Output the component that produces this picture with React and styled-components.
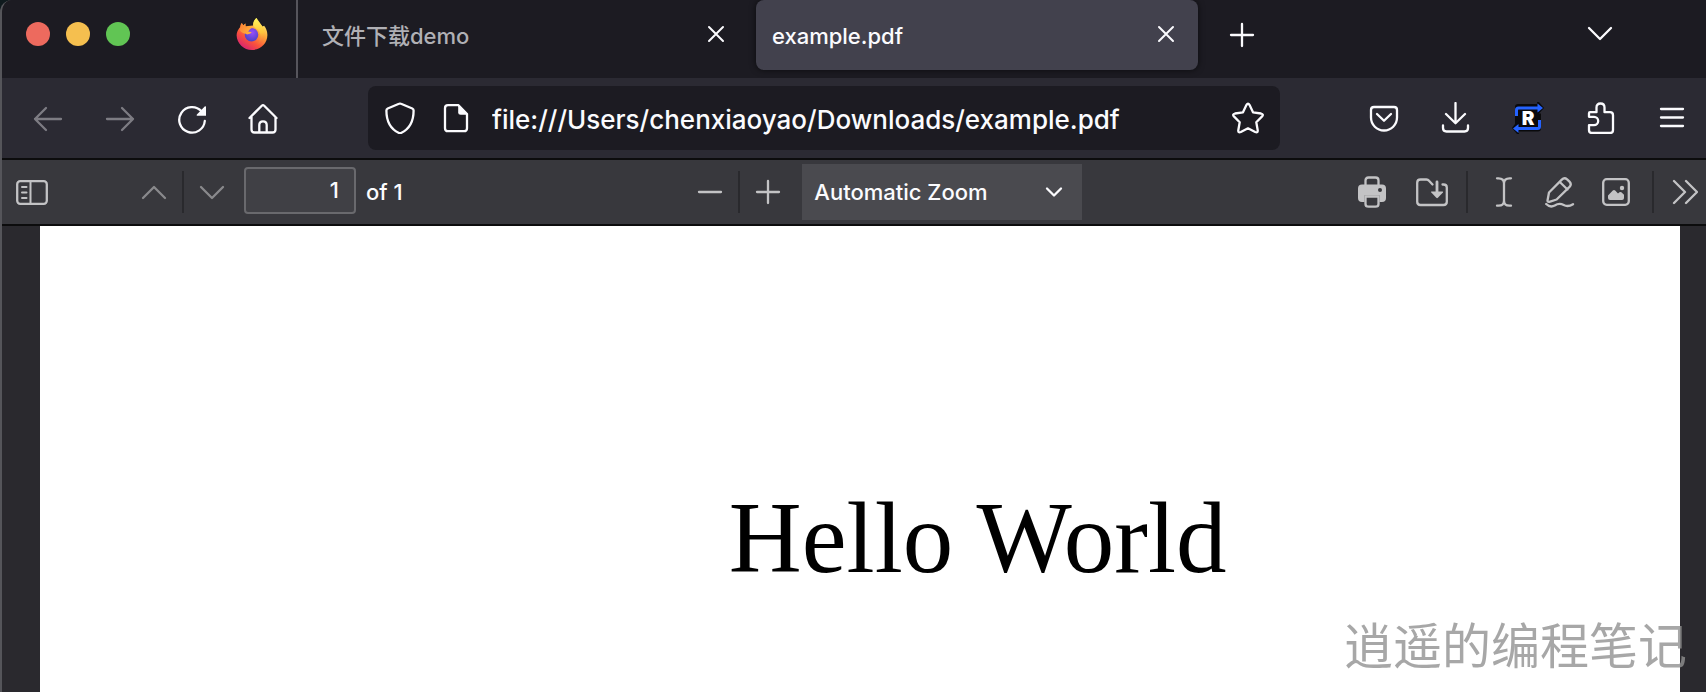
import React from "react";
import styled, { createGlobalStyle } from "styled-components";

const GlobalStyle = createGlobalStyle`
  *, *::before, *::after { box-sizing: border-box; }
  html { background: #0f1a1e; }
  body {
    margin: 0;
    font-family: Inter, "Noto Sans CJK SC", sans-serif;
    font-weight: 500;
    color: #fbfbfe;
  }
  button, input, select { font: inherit; color: inherit; }
`;

const Window = styled.div`
  position: relative;
  display: flex;
  flex-direction: column;
  min-height: 100vh;
  overflow: hidden;
  border-left: 2px solid #55555a;
  border-top-left-radius: 12px;
  background: #2a292e;
`;

const TabStrip = styled.header`
  display: flex;
  height: 78px;
  padding-right: 74px;
  background: #1c1b22;
`;

const TrafficLights = styled.div`
  display: flex;
  gap: 16px;
  padding: 22px 0 0 24px;
`;

const Light = styled.button`
  width: 24px;
  height: 24px;
  padding: 0;
  border: 0;
  border-radius: 50%;
  background: ${(p) => p.$color};
`;

const PinnedTab = styled.a`
  display: flex;
  padding: 18px 28px 0 106px;
  border-right: 2px solid #56555c;
  height: 78px;
`;

const Tab = styled.div`
  display: flex;
  justify-content: space-between;
  flex: 0 1 ${(p) => (p.$active ? 442 : 446)}px;
  height: 70px;
  padding: 0 ${(p) => (p.$active ? "16px 0 16px" : "12px 0 24px")};
  margin-right: 12px;
  border-radius: 8px;
  background: ${(p) => (p.$active ? "#42414d" : "transparent")};
  box-shadow: ${(p) => (p.$active ? "0 0 6px rgba(0, 0, 0, 0.6)" : "none")};
  color: ${(p) => (p.$active ? "#fbfbfe" : "#b0b0b5")};
`;

const TabLink = styled.a`
  font-size: 22px;
  line-height: 72px;
  color: inherit;
  text-decoration: none;
  white-space: nowrap;
`;

const IconButton = styled.button`
  display: flex;
  align-items: center;
  justify-content: center;
  flex: none;
  width: ${(p) => p.$width || 64}px;
  height: ${(p) => p.$height || 64}px;
  margin-left: ${(p) => (p.$end ? "auto" : 0)};
  padding: 0;
  border: 0;
  background: none;
  color: ${(p) => p.$color || "#fbfbfe"};
`;

const Icon = styled.svg`
  display: block;
  flex: none;
  width: 32px;
  height: 32px;
  fill: none;
  stroke: currentColor;
  stroke-width: 2.3;
  stroke-linecap: round;
  stroke-linejoin: round;
`;

const NavBar = styled.nav`
  display: flex;
  align-items: center;
  gap: 72px;
  height: 82px;
  padding: 0 2px 0 14px;
  border-bottom: 2px solid #0c0c0d;
  background: #2b2a33;
`;

const ButtonGroup = styled.div`
  display: flex;
  gap: 8px;
`;

const AddressBar = styled.form`
  display: flex;
  align-items: center;
  flex: 1;
  min-width: 0;
  height: 64px;
  border-radius: 8px;
  background: #1c1b22;
`;

const AddressInput = styled.input`
  flex: 1;
  min-width: 0;
  height: 48px;
  padding: 2px 0 0;
  margin-left: 12px;
  border: 0;
  outline: 0;
  background: none;
  font-size: 26px;
`;

const PdfToolbar = styled.div`
  display: flex;
  align-items: center;
  justify-content: space-between;
  height: 66px;
  border-bottom: 2px solid #0c0c0d;
  background: #38383d;
  color: #c3c3c5;
`;

const ToolGroup = styled.div`
  display: flex;
  align-items: center;
  padding-left: ${(p) => p.$indent || 0}px;
`;

const Separator = styled.span`
  width: 2px;
  height: 42px;
  background: #29292d;
  margin: 0 ${(p) => p.$gap || 0}px;
`;

const PageInput = styled.input`
  width: 112px;
  height: 47px;
  margin: 0 0 4px 4px;
  padding: 0 15px;
  border: 2px solid #69696d;
  border-radius: 4px;
  background: #404045;
  color: #fbfbfe;
  font-size: 22px;
  text-align: right;
`;

const PageCount = styled.label`
  margin-left: 10px;
  font-size: 22px;
  color: #fbfbfe;
`;

const ZoomField = styled.div`
  display: grid;
  align-items: center;
  width: 280px;
  height: 56px;
  margin-left: 7px;
  background: #4a4a4f;
  color: #fbfbfe;
`;

const ZoomSelect = styled.select`
  grid-area: 1 / 1;
  width: 100%;
  height: 56px;
  padding: 0 48px 0 12px;
  border: 0;
  appearance: none;
  background: none;
  font-size: 22px;
`;

const ZoomArrow = styled.span`
  grid-area: 1 / 1;
  justify-self: end;
  margin-right: 12px;
  pointer-events: none;
`;

const Viewer = styled.main`
  display: flex;
  flex: 1;
  padding: 0 26px 0 38px;
`;

const Page = styled.article`
  flex: 1;
  padding: 256px 0 60px 42%;
  background: #fff;
  color: #000;
`;

const Title = styled.h1`
  margin: 0;
  font: 400 101px/112px "Liberation Serif", serif;
  white-space: nowrap;
`;

const Watermark = styled.p`
  position: absolute;
  right: 19px;
  bottom: 17px;
  margin: 0;
  font: 400 49px/64px "Noto Sans CJK SC", sans-serif;
  color: rgba(145, 145, 145, 0.8);
`;

const Firefox = () => (
  <Icon viewBox="0 0 32 32" aria-hidden="true">
    <defs>
      <linearGradient id="fxBody" x1="0.85" y1="0.1" x2="0.25" y2="1">
        <stop offset="0" stopColor="#fff36e" />
        <stop offset="0.35" stopColor="#ffa436" />
        <stop offset="0.68" stopColor="#f9503d" />
        <stop offset="1" stopColor="#d51f76" />
      </linearGradient>
      <linearGradient id="fxFlame" x1="0.5" y1="0" x2="0.5" y2="1">
        <stop offset="0" stopColor="#fff85c" />
        <stop offset="0.55" stopColor="#ffc43c" />
        <stop offset="1" stopColor="#f9633b" />
      </linearGradient>
      <radialGradient id="fxGlobe" cx="0.55" cy="0.35" r="0.65">
        <stop offset="0" stopColor="#9a4dfb" />
        <stop offset="1" stopColor="#4b43c4" />
      </radialGradient>
      <linearGradient id="fxHead" x1="0" y1="0" x2="1" y2="0.5">
        <stop offset="0" stopColor="#fd7d35" />
        <stop offset="1" stopColor="#ffb13b" />
      </linearGradient>
    </defs>
    <g stroke="none">
      <path fill="url(#fxBody)" d="M5.8 5C4.6 6.3 4.2 7.6 4.2 9 2 11.500 .6 14.500.6 17.200.8 25.400 7.700 32 16 32s15.400-6.500 15.400-15c0-3.500-1.500-7.300-3.300-9.200L26.500 8.600 20.500 0C18 2 17 4.500 17.200 7.500L9.500 8.200 9.400 5.600 7.300 7.300z" />
      <path fill="url(#fxFlame)" d="M20.500 0c.5 3.300 3.500 5.300 5.600 8.300 4.500 6.700 2.300 15-4.600 18.100 3.300-4.400 4.200-9.600 1-13.800-2-2.600-5.400-3.200-5.300-5.600C17.200 4 18.400 1.500 20.500 0z" />
      <circle cx="15.500" cy="16.700" r="6.800" fill="url(#fxGlobe)" />
      <path fill="url(#fxHead)" d="M5.800 5 4.500 9C3 11 3.500 13 6 14.500c1.500 1 3.500.8 5 2 1-.2 2.700-.7 4.500-1.800 0-.7-.8-1-3.300-1 1-1.900 2.200-2.900 4-3.900-2.400-.9-4.600-.8-6.700-.2L9.400 5.600 7.300 8z" />
    </g>
  </Icon>
);

const Close = () => (
  <Icon viewBox="0 0 32 32"><path d="M9 9l14 14M23 9 9 23" strokeWidth="2" /></Icon>
);
const Plus = () => <Icon viewBox="0 0 32 32"><path d="M16 5v22M5 16h22" /></Icon>;
const Minus = () => <Icon viewBox="0 0 32 32"><path d="M5 16h22" /></Icon>;
const Chevron = ({ up }) => (
  <Icon viewBox="0 0 32 32"><path d={up ? "M5 22 16 11l11 11" : "M5 11l11 11 11-11"} /></Icon>
);

export default function App() {
  return (
    <>
      <GlobalStyle />
      <Window>
        <TabStrip>
          <TrafficLights>
            <Light $color="#ed6a5e" aria-label="Close window" />
            <Light $color="#f5bf4f" aria-label="Minimize window" />
            <Light $color="#61c554" aria-label="Zoom window" />
          </TrafficLights>
          <PinnedTab href="#firefox" aria-label="Firefox"><Firefox /></PinnedTab>
          <Tab>
            <TabLink href="#demo">文件下载demo</TabLink>
            <IconButton $width={32} $height={68} aria-label="Close tab"><Close /></IconButton>
          </Tab>
          <Tab $active>
            <TabLink href="#example">example.pdf</TabLink>
            <IconButton $width={32} $height={68} aria-label="Close tab"><Close /></IconButton>
          </Tab>
          <IconButton $height={70} aria-label="New tab"><Plus /></IconButton>
          <IconButton $height={66} $end aria-label="List all tabs"><Chevron /></IconButton>
        </TabStrip>

        <NavBar>
          <ButtonGroup>
            <IconButton $color="#7d7c83" aria-label="Back">
              <Icon viewBox="0 0 32 32"><path d="M29 17H3M14 6 3 17l11 11" /></Icon>
            </IconButton>
            <IconButton $color="#7d7c83" aria-label="Forward">
              <Icon viewBox="0 0 32 32"><path d="M3 17h26M18 6l11 11-11 11" /></Icon>
            </IconButton>
            <IconButton aria-label="Reload">
              <Icon viewBox="0 0 32 32">
                <path d="M25.500 9.200A12.800 12.800 0 1 0 28.800 19" />
                <path d="M30 4.800v9h-8.600c-.8 0-1-.8-.5-1.300l7.800-7.900c.5-.5 1.300-.3 1.300.2z" fill="currentColor" stroke="none" />
              </Icon>
            </IconButton>
            <IconButton aria-label="Home">
              <Icon viewBox="0 0 32 32">
                <path d="M1.500 16 13.800 3.700q1.200-1.200 2.400 0L28.500 16M3.500 15V27.500q0 3 3 3H24.500q3 0 3-3V15M11.300 30.500V23q0-3.700 3.700-3.700t3.700 3.700v7.500" />
              </Icon>
            </IconButton>
          </ButtonGroup>
          <AddressBar>
            <IconButton type="button" aria-label="Tracking protection">
              <Icon viewBox="0 0 32 32">
                <path d="M15 1.800q1-.5 2 0L28.300 6.500q1.300.6 1.300 2C29.600 20 26 26.800 17 31q-1 .4-2 0C6 26.800 2.400 20 2.400 8.500q0-1.400 1.300-2z" />
              </Icon>
            </IconButton>
            <IconButton type="button" $width={48} aria-label="Site information">
              <Icon viewBox="0 0 32 32">
                <path d="M18.500 3.200H8q-3 0-3 3v20q0 3 3 3h16q3 0 3-3V12z" />
                <path d="M18.200 2.200v8q0 2.500 2.500 2.500h7.500z" fill="currentColor" stroke="none" />
              </Icon>
            </IconButton>
            <AddressInput aria-label="Address" defaultValue="file:///Users/chenxiaoyao/Downloads/example.pdf" />
            <IconButton type="button" aria-label="Bookmark this page">
              <Icon viewBox="0 0 32 32">
                <path d="M14.400 3.100q1.600-3 3.200 0l3.400 7.200 8 1.200q3 .7 1.100 2.900l-5.800 5.800 1.400 8q.3 3-2.500 1.800L16 26.300 8.800 30Q6 31.200 6.300 28.200l1.400-8-5.800-5.800Q0 12.200 3 11.500l8-1.200z" />
              </Icon>
            </IconButton>
          </AddressBar>
          <ButtonGroup>
            <IconButton aria-label="Save to Pocket">
              <Icon viewBox="0 0 32 32">
                <path d="M6 5h20q3 0 3 3v7.500a13 13 0 0 1-26 0V8q0-3 3-3zM9 12l7 6.800L23 12" />
              </Icon>
            </IconButton>
            <IconButton aria-label="Downloads">
              <Icon viewBox="0 0 32 32">
                <path d="M15.500 1v20M6 12l9.500 9.300L25 12M3 23.500V26q0 3.500 3.500 3.500h18Q28 29.500 28 26v-2.500" />
              </Icon>
            </IconButton>
            <IconButton aria-label="R extension">
              <Icon viewBox="0 0 32 32">
                <path d="M3 5q0-3 3-3h19V0h2l5 6-5 5.500h2v15q0 3-3 3H7V32H5l-5-6 3-4z" fill="#0a0a0c" stroke="none" />
                <path d="M4.500 14V8q0-2 2-2H26" stroke="#2563ff" strokeWidth="3" strokeLinecap="butt" />
                <path d="M27.500 18v6.500q0 2-2 2H6" stroke="#2563ff" strokeWidth="3" strokeLinecap="butt" />
                <path d="M25.500 1.500 31 6l-5.500 4.500zM6.500 22 1 26.500 6.500 31z" fill="#2563ff" stroke="none" />
                <text x="16" y="23" textAnchor="middle" fontFamily="Inter, sans-serif" fontSize="19" fontWeight="900" fill="#fff" stroke="none">R</text>
              </Icon>
            </IconButton>
            <IconButton aria-label="Extensions">
              <Icon viewBox="0 0 32 32">
                <path d="M6 10.200h6.500V5.500q0-4 4-4t4 4v4.700H26q3 0 3 3V28q0 3-3 3H8q-3 0-3-3v-4.800h5a4.200 4.200 0 0 0 0-8.400H5V11.200q0-1 1-1z" />
              </Icon>
            </IconButton>
            <IconButton aria-label="Application menu">
              <Icon viewBox="0 0 32 32"><path d="M5 7h22M5 15.500h22M5 24h22" /></Icon>
            </IconButton>
          </ButtonGroup>
        </NavBar>

        <PdfToolbar>
          <ToolGroup>
            <IconButton $width={60} $color="#c3c3c5" aria-label="Toggle sidebar">
              <Icon viewBox="0 0 32 32">
                <rect x="1.200" y="5.200" width="29.600" height="22.600" rx="3" />
                <path d="M14.500 5v23M6 11h4.500M6 16.500h4.500M6 22h4.500" strokeWidth="2" />
              </Icon>
            </IconButton>
            <ToolGroup $indent={64}>
              <IconButton $width={56} $color="#89898c" aria-label="Previous page"><Chevron up /></IconButton>
              <Separator />
              <IconButton $width={56} $color="#89898c" aria-label="Next page"><Chevron /></IconButton>
            </ToolGroup>
            <PageInput id="page" defaultValue="1" />
            <PageCount htmlFor="page">of 1</PageCount>
          </ToolGroup>
          <ToolGroup $indent={20}>
            <IconButton $width={56} $color="#c3c3c5" aria-label="Zoom out"><Minus /></IconButton>
            <Separator />
            <IconButton $width={55} $color="#c3c3c5" aria-label="Zoom in"><Plus /></IconButton>
            <ZoomField>
              <ZoomSelect aria-label="Zoom"><option>Automatic Zoom</option></ZoomSelect>
              <ZoomArrow>
                <Icon viewBox="0 0 32 32"><path d="M9 12.500l7 7 7-7" /></Icon>
              </ZoomArrow>
            </ZoomField>
          </ToolGroup>
          <ToolGroup>
            <IconButton $width={60} $color="#c3c3c5" aria-label="Print">
              <Icon viewBox="0 0 32 32">
                <path d="M9.500 9V4.500q0-3 3-3h7q3 0 3 3V9" />
                <path d="M6 8.500h20q4 0 4 4V22q0 4-4 4h-2.500v-6.500h-15V26H6q-4 0-4-4v-9.500q0-4 4-4z" fill="currentColor" stroke="none" />
                <path d="M9.500 20.500V28q0 2.700 3 2.700h7q3 0 3-2.700v-7.500z" fill="#38383d" />
                <circle cx="24" cy="14" r="2" fill="#38383d" stroke="none" />
              </Icon>
            </IconButton>
            <IconButton $width={60} $color="#c3c3c5" aria-label="Save">
              <Icon viewBox="0 0 32 32">
                <path d="M16.500 8.500 13 4.800q-1-1.300-2.500-1.300H4.500q-3.300 0-3.300 3.300v18.900q0 3.300 3.300 3.300h23q3.300 0 3.300-3.300V11.500q0-3-3.300-3h-1" />
                <path d="M21 6v12" strokeWidth="2.800" />
                <path d="M15.500 15.500h11q1 .2.400 1l-5 5.300q-.8.800-1.600 0l-5-5.300q-.7-.8.200-1z" fill="currentColor" stroke="none" />
              </Icon>
            </IconButton>
            <Separator $gap={4} />
            <IconButton $width={64} $color="#c3c3c5" aria-label="Text">
              <Icon viewBox="0 0 32 32">
                <path d="M9 2.300h1.500q5.500 0 5.500 5v17.400q0 5-5.500 5H9M23 2.300h-1.500q-5.500 0-5.500 5v17.400q0 5 5.500 5H23" />
              </Icon>
            </IconButton>
            <IconButton $width={48} $color="#c3c3c5" aria-label="Draw">
              <Icon viewBox="0 0 32 32">
                <path d="M3.500 24.500 5 16.500 17.800 3.600q2.500-2.600 5.300-.3l2.400 2.300q2.500 2.600 0 5.300L12.600 23.500l-7.300 2.300q-1.800.4-1.800-1.300zM15.800 6l7.700 7.500" />
                <path d="M2.200 28q4 4 8.500 1.500 4.500-2.800 9-.5 4.300 2.300 9.300-.8" />
              </Icon>
            </IconButton>
            <IconButton $width={64} $color="#c3c3c5" aria-label="Add image">
              <Icon viewBox="0 0 32 32">
                <rect x="3.200" y="3.200" width="25.600" height="25.600" rx="3.500" />
                <path d="M8 22v-2.500l4.800-5q1.200-1 2.400 0l2.800 3 1.400-1.200q1-.8 2 0L24 18.800V22q0 2-2 2H10q-2 0-2-2z" fill="currentColor" stroke="none" />
                <circle cx="22" cy="12" r="2.200" fill="currentColor" stroke="none" />
              </Icon>
            </IconButton>
            <Separator $gap={4} />
            <IconButton $width={48} $color="#c3c3c5" aria-label="Tools">
              <Icon viewBox="-4 0 32 32"><path d="M6 5l11 11L6 27M18 5l11 11-11 11" transform="translate(-2 0)" /></Icon>
            </IconButton>
          </ToolGroup>
        </PdfToolbar>

        <Viewer>
          <Page><Title>Hello World</Title></Page>
        </Viewer>
        <Watermark>逍遥的编程笔记</Watermark>
      </Window>
    </>
  );
}
